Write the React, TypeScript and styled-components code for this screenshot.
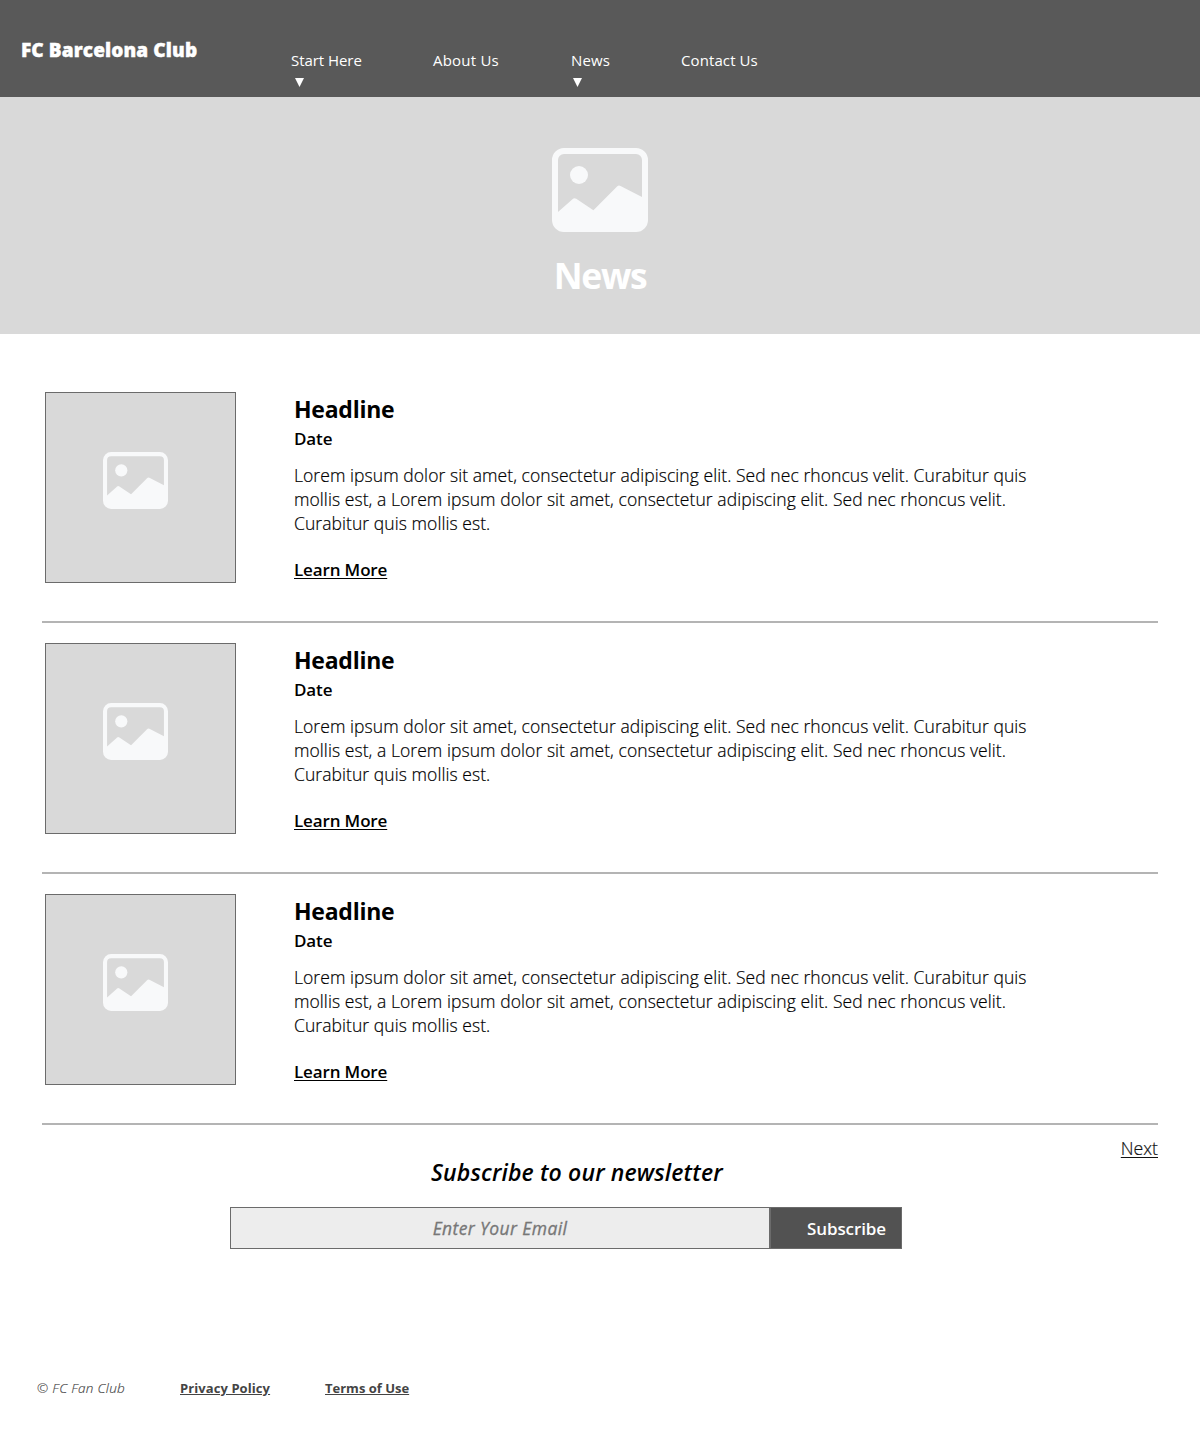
import React from "react";
import styled, { createGlobalStyle } from "styled-components";

const Global = createGlobalStyle`
  * { box-sizing: border-box; }
  body { margin: 0; background: #fff; font-family: "Open Sans", "Noto Sans", sans-serif; color: #000; }
  h1, h2, h3, p { margin: 0; }
  a { color: inherit; }
`;

const Header = styled.header`
  display: flex;
  height: 97px;
  padding-left: 21px;
  background: #595959;
  color: #fff;
`;
const Brand = styled.div`
  width: 270px;
  padding-top: 36px;
  font-size: 19px;
  line-height: 28px;
  font-weight: 800;
  letter-spacing: 0.12px;
  -webkit-text-stroke: 0.4px #fff;
  white-space: nowrap;
`;
const Nav = styled.nav`
  display: flex;
  padding-top: 50px;
`;
const NavItem = styled.a<{ $width: number; $track: number }>`
  width: ${(p) => p.$width}px;
  display: flex;
  flex-direction: column;
  font-size: 15px;
  line-height: 21px;
  letter-spacing: ${(p) => p.$track}px;
  white-space: nowrap;
  text-decoration: none;
`;
const Caret = styled.span<{ $indent: number }>`
  width: 9px;
  height: 9px;
  margin: 7px 0 0 ${(p) => p.$indent}px;
  background: #fff;
  clip-path: polygon(0 0, 100% 0, 50% 100%);
`;
const Hero = styled.section`
  display: flex;
  flex-direction: column;
  align-items: center;
  height: 237px;
  padding-top: 45px;
  background: #d9d9d9;
  color: #fff;
`;
const HeroTitle = styled.h1`
  margin-top: 13px;
  font-size: 35.5px;
  line-height: 48px;
  font-weight: 700;
  letter-spacing: -1.4px;
`;
const IconSvg = styled.svg<{ $size: number }>`
  display: block;
  width: ${(p) => p.$size}px;
  height: ${(p) => p.$size}px;
  fill: #f8f9fa;
`;
const List = styled.main`
  padding: 38px 42px 0;
`;
const Article = styled.article`
  display: flex;
  height: 251px;
  padding: 20px 0 0 3px;
  border-bottom: 2px solid #b4b4b4;
`;
const Thumb = styled.div`
  flex: none;
  width: 191px;
  height: 191px;
  margin-right: 58px;
  padding: 55px 0 0 57px;
  border: 1px solid #6b6b6b;
  background: #d9d9d9;
`;
const Copy = styled.div`
  display: flex;
  flex-direction: column;
  align-items: flex-start;
  white-space: nowrap;
`;
const Headline = styled.h2`
  margin-top: 1px;
  font-size: 23px;
  line-height: 32px;
  font-weight: 700;
  letter-spacing: -0.25px;
`;
const DateLine = styled.h3`
  margin-top: 2px;
  font-size: 17px;
  line-height: 24px;
  font-weight: 600;
  letter-spacing: -0.12px;
`;
const Body = styled.p`
  margin-top: 12px;
  font-size: 17.5px;
  line-height: 24px;
  font-weight: 300;
  letter-spacing: 0.065px;
  -webkit-text-stroke: 0.2px #000;
`;
const Line = styled.span`
  display: block;
`;
const More = styled.a`
  margin-top: 23px;
  font-size: 17px;
  line-height: 24px;
  font-weight: 600;
  letter-spacing: -0.14px;
  text-underline-offset: 2px;
`;
const Newsletter = styled.section`
  display: grid;
  grid-template-columns: 230px 672px 1fr;
  height: 242px;
  padding: 11px 42px 0 0;
`;
const Form = styled.form`
  grid-column: 2;
  padding-top: 20px;
`;
const FormTitle = styled.h2`
  padding-left: 201px;
  font-size: 23px;
  line-height: 32px;
  font-weight: 600;
  font-style: italic;
  letter-spacing: 0.15px;
  white-space: nowrap;
`;
const Fields = styled.div`
  display: flex;
  height: 42px;
  margin-top: 19px;
`;
const Email = styled.input`
  width: 540px;
  padding: 0 0 1px;
  border: 1px solid #6b6b6b;
  border-radius: 0;
  background: #ededed;
  font: italic 400 17.5px/24px "Open Sans", sans-serif;
  letter-spacing: 0.4px;
  text-align: center;
  &::placeholder {
    color: #777;
    opacity: 1;
    -webkit-text-stroke: 0.3px #777;
  }
`;
const Submit = styled.button`
  width: 132px;
  padding: 2px 15px 0 0;
  border: 1px solid #6b6b6b;
  background: #525252;
  color: #fff;
  font: 600 17px/24px "Open Sans", sans-serif;
  letter-spacing: -0.1px;
  text-align: right;
`;
const Next = styled.a`
  justify-self: end;
  font-size: 17.7px;
  line-height: 24px;
  font-weight: 300;
  color: #111;
  -webkit-text-stroke: 0.2px #111;
  text-underline-offset: 2px;
`;
const Footer = styled.footer`
  display: flex;
  padding: 12px 0 0 37px;
  font-size: 13px;
  line-height: 18px;
  color: #444;
  white-space: nowrap;
`;
const Copyright = styled.span`
  width: 143px;
  font-size: 13.5px;
  font-style: italic;
  font-weight: 300;
  letter-spacing: 0.3px;
  -webkit-text-stroke: 0.15px #444;
`;
const FooterItem = styled.span`
  width: 145px;
`;
const FooterLink = styled.a<{ $track?: number }>`
  font-weight: 700;
  letter-spacing: ${(p) => p.$track ?? 0}px;
`;

const Picture = ({ size }: { size: number }) => (
  <IconSvg $size={size} viewBox="0 0 16 16">
    <path d="M6 5.5a1.5 1.5 0 1 1-3 0 1.5 1.5 0 0 1 3 0z" />
    <path d="M2 1a2 2 0 0 0-2 2v10a2 2 0 0 0 2 2h12a2 2 0 0 0 2-2V3a2 2 0 0 0-2-2zm12 1a1 1 0 0 1 1 1v6.18l-3.58-1.85a.5.5 0 0 0-.577.093L6.9 11.38 4.04 9.47a.5.5 0 0 0-.63.06L1 11.68V3a1 1 0 0 1 1-1z" />
  </IconSvg>
);

const nav = [
  { label: "Start Here", width: 142, track: -0.05, caret: 4 },
  { label: "About Us", width: 138, track: 0.22, caret: 0 },
  { label: "News", width: 110, track: 0.1, caret: 2 },
  { label: "Contact Us", width: 90, track: 0.1, caret: 0 },
];

const lines = [
  "Lorem ipsum dolor sit amet, consectetur adipiscing elit. Sed nec rhoncus velit. Curabitur quis",
  "mollis est, a Lorem ipsum dolor sit amet, consectetur adipiscing elit. Sed nec rhoncus velit.",
  "Curabitur quis mollis est.",
];

export default function App() {
  return (
    <>
      <Global />
      <Header>
        <Brand>FC Barcelona Club</Brand>
        <Nav>
          {nav.map((n) => (
            <NavItem key={n.label} $width={n.width} $track={n.track}>
              {n.label}
              {n.caret > 0 && <Caret $indent={n.caret} />}
            </NavItem>
          ))}
        </Nav>
      </Header>
      <Hero>
        <Picture size={96} />
        <HeroTitle>News</HeroTitle>
      </Hero>
      <List>
        {[1, 2, 3].map((id) => (
          <Article key={id}>
            <Thumb>
              <Picture size={65} />
            </Thumb>
            <Copy>
              <Headline>Headline</Headline>
              <DateLine>Date</DateLine>
              <Body>
                {lines.map((text) => (
                  <Line key={text}>{text}</Line>
                ))}
              </Body>
              <More href="#">Learn More</More>
            </Copy>
          </Article>
        ))}
      </List>
      <Newsletter>
        <Form>
          <FormTitle>Subscribe to our newsletter</FormTitle>
          <Fields>
            <Email placeholder="Enter Your Email" />
            <Submit type="button">Subscribe</Submit>
          </Fields>
        </Form>
        <Next href="#">Next</Next>
      </Newsletter>
      <Footer>
        <Copyright>© FC Fan Club</Copyright>
        <FooterItem><FooterLink href="#" $track={0.08}>Privacy Policy</FooterLink></FooterItem>
        <FooterItem><FooterLink href="#">Terms of Use</FooterLink></FooterItem>
      </Footer>
    </>
  );
}
